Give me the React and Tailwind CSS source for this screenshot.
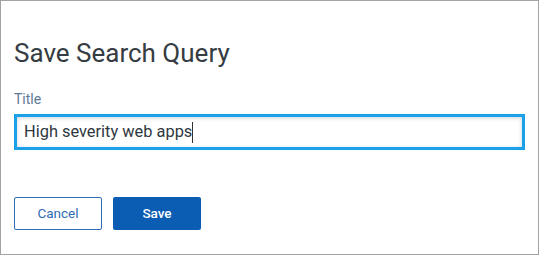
import React from 'react';

export default function App() {
  return (
    <div className="w-[539px] h-[255px] bg-white border border-[#a3a3a3] font-['Roboto',sans-serif]">
      <div className="pl-[13px] pr-[13px] pt-[36px]">
        <h2 className="text-[26px] leading-[32px] text-[#353c42]">Save Search Query</h2>
        <div className="mt-[22px] text-[14px] leading-[16px] text-[#5e7a96]">Title</div>
        <div className="mt-[7px] h-[36px] w-[511px] border-[3px] border-[#19a2ea] bg-white shadow-[inset_0_1px_4px_rgba(0,0,0,0.18)] flex items-center pl-[7px]">
          <span className="text-[16.4px] text-[#2f3840]">High severity web apps</span>
          <span className="w-px h-[21px] bg-[#333]"></span>
        </div>
        <div className="mt-[47px] flex gap-[11px]">
          <button className="w-[88px] h-[33px] rounded-[2px] border border-[#2f6eb8] text-[13.5px] text-[#2f6bb5]">Cancel</button>
          <button className="w-[88px] h-[33px] rounded-[2px] bg-[#0b5db3] text-[13.5px] font-medium text-white">Save</button>
        </div>
      </div>
    </div>
  );
}
